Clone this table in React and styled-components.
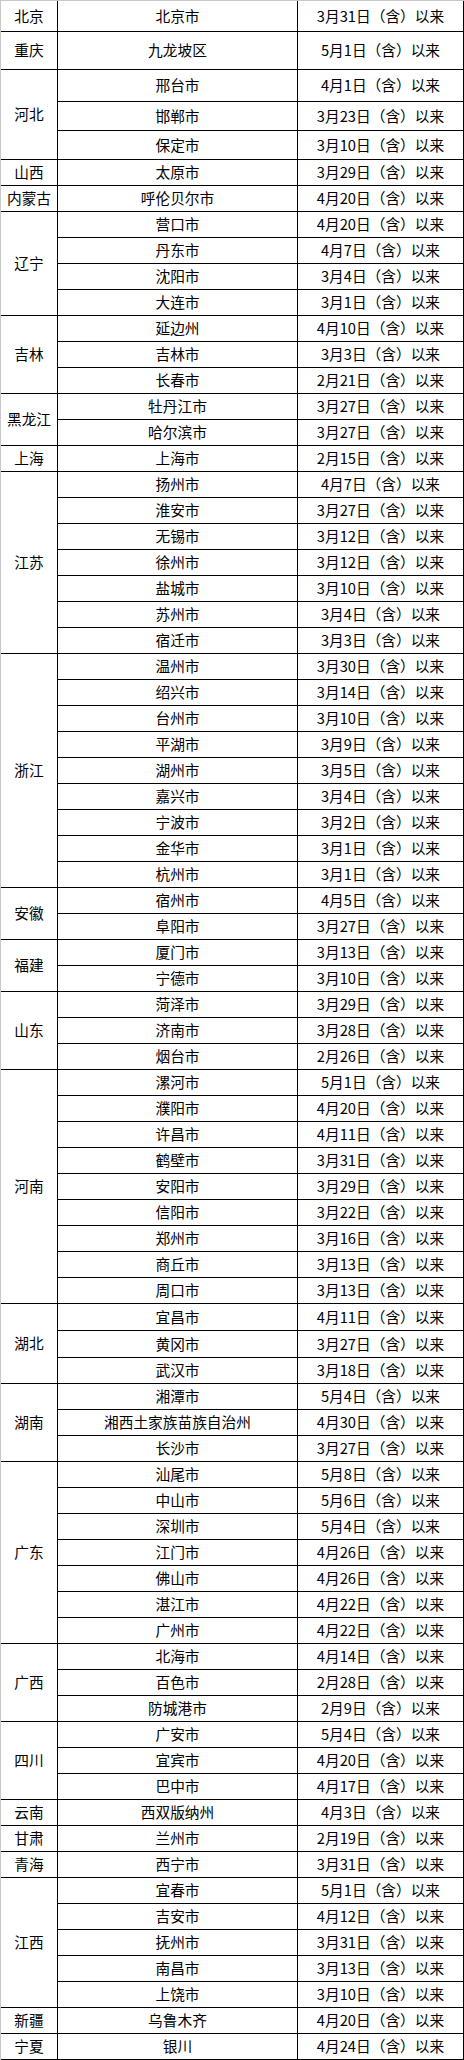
import React from "react";
import styled, { createGlobalStyle } from "styled-components";

const GlobalStyle = createGlobalStyle`
  html, body {
    margin: 0;
    padding: 0;
    background: #ffffff;
  }
  body {
    font-family: "Noto Sans CJK SC", "Noto Sans", sans-serif;
  }
`;

const R = (city, date, h) => ({ city, date, h });

const DATA = [
  ["北京", [R("北京市", "3月31日", 31)]],
  ["重庆", [R("九龙坡区", "5月1日", 38)]],
  ["河北", [R("邢台市", "4月1日", 32), R("邯郸市", "3月23日", 29), R("保定市", "3月10日", 29)]],
  ["山西", [R("太原市", "3月29日")]],
  ["内蒙古", [R("呼伦贝尔市", "4月20日")]],
  ["辽宁", [R("营口市", "4月20日"), R("丹东市", "4月7日"), R("沈阳市", "3月4日"), R("大连市", "3月1日")]],
  ["吉林", [R("延边州", "4月10日"), R("吉林市", "3月3日"), R("长春市", "2月21日")]],
  ["黑龙江", [R("牡丹江市", "3月27日"), R("哈尔滨市", "3月27日")]],
  ["上海", [R("上海市", "2月15日")]],
  ["江苏", [
    R("扬州市", "4月7日"), R("淮安市", "3月27日"), R("无锡市", "3月12日"), R("徐州市", "3月12日"),
    R("盐城市", "3月10日"), R("苏州市", "3月4日"), R("宿迁市", "3月3日"),
  ]],
  ["浙江", [
    R("温州市", "3月30日"), R("绍兴市", "3月14日"), R("台州市", "3月10日"), R("平湖市", "3月9日"),
    R("湖州市", "3月5日"), R("嘉兴市", "3月4日"), R("宁波市", "3月2日"), R("金华市", "3月1日"),
    R("杭州市", "3月1日"),
  ]],
  ["安徽", [R("宿州市", "4月5日"), R("阜阳市", "3月27日")]],
  ["福建", [R("厦门市", "3月13日"), R("宁德市", "3月10日")]],
  ["山东", [R("菏泽市", "3月29日"), R("济南市", "3月28日"), R("烟台市", "2月26日")]],
  ["河南", [
    R("漯河市", "5月1日"), R("濮阳市", "4月20日"), R("许昌市", "4月11日"), R("鹤壁市", "3月31日"),
    R("安阳市", "3月29日"), R("信阳市", "3月22日"), R("郑州市", "3月16日"), R("商丘市", "3月13日"),
    R("周口市", "3月13日"),
  ]],
  ["湖北", [R("宜昌市", "4月11日", 27), R("黄冈市", "3月27日", 27), R("武汉市", "3月18日")]],
  ["湖南", [R("湘潭市", "5月4日"), R("湘西土家族苗族自治州", "4月30日"), R("长沙市", "3月27日")]],
  ["广东", [
    R("汕尾市", "5月8日"), R("中山市", "5月6日"), R("深圳市", "5月4日"), R("江门市", "4月26日"),
    R("佛山市", "4月26日"), R("湛江市", "4月22日"), R("广州市", "4月22日"),
  ]],
  ["广西", [R("北海市", "4月14日"), R("百色市", "2月28日"), R("防城港市", "2月9日")]],
  ["四川", [R("广安市", "5月4日"), R("宜宾市", "4月20日"), R("巴中市", "4月17日")]],
  ["云南", [R("西双版纳州", "4月3日")]],
  ["甘肃", [R("兰州市", "2月19日")]],
  ["青海", [R("西宁市", "3月31日")]],
  ["江西", [
    R("宜春市", "5月1日"), R("吉安市", "4月12日"), R("抚州市", "3月31日"), R("南昌市", "3月13日"),
    R("上饶市", "3月10日"),
  ]],
  ["新疆", [R("乌鲁木齐", "4月20日")]],
  ["宁夏", [R("银川", "4月24日")]],
];

const Sheet = styled.div`
  display: grid;
  width: 464px;
  box-sizing: border-box;
  border-top: 1px solid #c8c8c8;
  border-left: 1px solid #c8c8c8;
  grid-template-columns: 57px 240px 166px;
  grid-template-rows: ${(p) => p.$rows};
  background: #ffffff;
`;

const Cell = styled.div`
  display: flex;
  align-items: center;
  justify-content: center;
  box-sizing: border-box;
  border-right: 1px solid #000000;
  border-bottom: 1px solid #000000;
  color: #000000;
  font-family: "Noto Sans CJK SC", "Noto Sans", sans-serif;
  font-size: 14.7px;
  line-height: 1;
  white-space: nowrap;
  overflow: hidden;
`;

const ProvinceCell = styled(Cell)`
  grid-column: 1;
  grid-row: span ${(p) => p.$span};
`;

const CityCell = styled(Cell)`
  grid-column: 2;
`;

const DateCell = styled(Cell)`
  grid-column: 3;
`;

export default function App() {
  const heights = [];
  DATA.forEach(([, rows]) => rows.forEach((r) => heights.push(`${r.h || 26}px`)));

  return (
    <>
      <GlobalStyle />
      <Sheet $rows={heights.join(" ")}>
        {DATA.map(([prov, rows]) => (
          <React.Fragment key={prov}>
            <ProvinceCell $span={rows.length}>{prov}</ProvinceCell>
            {rows.map((r) => (
              <React.Fragment key={r.city}>
                <CityCell>{r.city}</CityCell>
                <DateCell>{r.date}（含）以来</DateCell>
              </React.Fragment>
            ))}
          </React.Fragment>
        ))}
      </Sheet>
    </>
  );
}
